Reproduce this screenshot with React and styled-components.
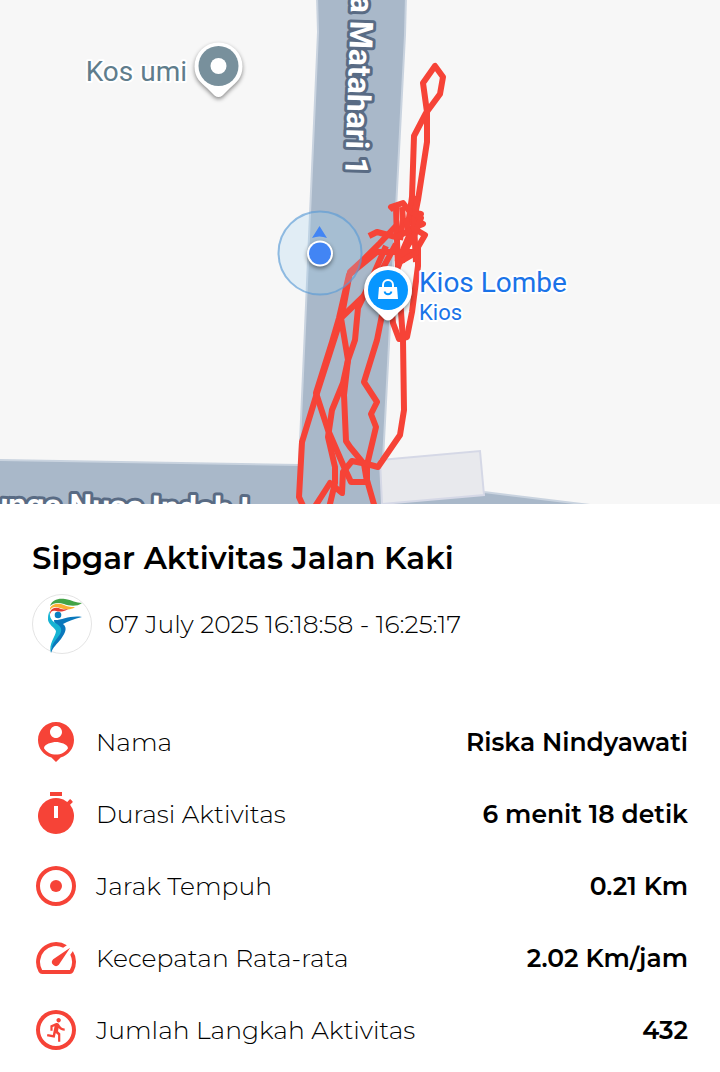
import React from 'react'
import styled, { createGlobalStyle } from "styled-components"

const GlobalStyle = createGlobalStyle`
    * {
        box-sizing: border-box;
    }

    body {
        margin: 0;
        background-color: #fff;
        color: #000;
        font-family: Montserrat, Inter, sans-serif;
    }
`;

const MapView = styled.svg`
    display: block;
    width: 100%;
    aspect-ratio: 720 / 504;
    background-color: #f7f7f7;
    font-family: Roboto, sans-serif;
`;

const Road = styled.path`
    fill: #a9b8c9;
    stroke: #c9d3df;
    stroke-width: 2;
`;

const RoadLabel = styled.text`
    fill: #fff;
    stroke: #596b84;
    stroke-width: 6;
    stroke-linejoin: round;
    paint-order: stroke;
    font-size: 32px;
    font-weight: 700;
`;

const PlaceLabel = styled.text`
    fill: ${({ $color }) => $color};
    stroke: #fff;
    stroke-width: 4;
    stroke-linejoin: round;
    paint-order: stroke;
    font-size: ${({ $small }) => $small ? "22px" : "28px"};
`;

const Track = styled.g`
    fill: none;
    stroke: #f64337;
    stroke-width: 6;
    stroke-linejoin: round;
`;

const Pin = styled.g`
    filter: drop-shadow(0 2px 2px rgba(0, 0, 0, 0.45));
`;

const Details = styled.main`
    padding: 34px 32px 6px;
`;

const Title = styled.h1`
    margin: 0 0 16px;
    font-size: 31px;
    font-weight: 600;
    line-height: 40px;
`;

const Session = styled.div`
    display: flex;
    align-items: center;
    gap: 16px;
    margin-bottom: 52px;
    font-size: 25px;
    font-weight: 300;
`;

const Avatar = styled.svg`
    flex: none;
    width: 60px;
    height: 60px;
`;

const Stats = styled.dl`
    margin: 0;
`;

const Row = styled.div`
    display: flex;
    align-items: center;
    min-height: 72px;
    font-size: 25px;
`;

const Icon = styled.svg`
    flex: none;
    width: 48px;
    height: 48px;
    margin-right: 16px;
    fill: #f64337;
`;

const Label = styled.dt`
    flex: 1;
    font-weight: 300;
`;

const Value = styled.dd`
    margin: 0;
    font-weight: 600;
    text-align: right;
`;

const ring = "M12 2a10 10 0 1 0 0 20 10 10 0 0 0 0-20zm0 18a8 8 0 1 1 0-16 8 8 0 0 1 0 16z"

const stats = [
    {
        label: "Nama",
        value: "Riska Nindyawati",
        icon: <path d="M12 2c-4.97 0-9 4.03-9 9 0 4.17 2.84 7.67 6.69 8.69L12 22l2.31-2.31C18.16 18.67 21 15.17 21 11c0-4.97-4.03-9-9-9zm0 2c1.66 0 3 1.34 3 3s-1.34 3-3 3-3-1.34-3-3 1.34-3 3-3zm0 14.3c-2.5 0-4.71-1.28-6-3.22.03-1.99 4-3.08 6-3.08 1.99 0 5.97 1.09 6 3.08-1.29 1.94-3.5 3.22-6 3.22z" />,
    },
    {
        label: "Durasi Aktivitas",
        value: "6 menit 18 detik",
        icon: <path fillRule="evenodd" d="M15 1H9v2h6V1zm4.03 6.39 1.42-1.42c-.43-.51-.9-.99-1.41-1.41l-1.42 1.42A9 9 0 1 0 19.03 7.39zM13 14h-2V8h2v6z" />,
    },
    {
        label: "Jarak Tempuh",
        value: "0.21 Km",
        icon: <><path d={ring} /><circle cx="12" cy="12" r="3" /></>,
    },
    {
        label: "Kecepatan Rata-rata",
        value: "2.02 Km/jam",
        icon: <path d="M20.38 8.57l-1.23 1.85a8 8 0 0 1-.22 7.58H5.07A8 8 0 0 1 15.58 6.85l1.85-1.23A10 10 0 0 0 3.35 19a2 2 0 0 0 1.72 1h13.85a2 2 0 0 0 1.74-1 10 10 0 0 0-.27-10.44zm-9.79 6.84a2 2 0 0 0 2.83 0l5.66-8.49-8.49 5.66a2 2 0 0 0 0 2.83z" />,
    },
    {
        label: "Jumlah Langkah Aktivitas",
        value: "432",
        icon: (
            <>
                <path d={ring} />
                <path transform="translate(5.9 5.2) scale(.55)" d="M13.49 5.48c1.1 0 2-.9 2-2s-.9-2-2-2-2 .9-2 2 .9 2 2 2zm-3.6 13.9l1-4.4 2.1 2v6h2v-7.5l-2.1-2 .6-3c1.3 1.5 3.3 2.5 5.5 2.5v-2c-1.9 0-3.5-1-4.3-2.4l-1-1.6c-.4-.6-1-1-1.7-1-.3 0-.5.1-.8.1l-5.2 2.2v4.7h2v-3.4l1.8-.7-1.6 8.1-4.9-1-.4 2 7 1.4z" />
            </>
        ),
    },
]

const tracks = [
    "408,225 412,197 414,136 426,113 440,94 443,77 435,66 423,83 427,112 427,142 418,200 411,235 402,262",
    "394,210 391,207 403,203 410,212 421,214 413,219 423,224 413,228 425,235 418,247 418,266 412,312 407,337 399,339 393,323 391,300",
    "396,207 397,240 398,267",
    "402,207 403,220 400,240",
    "417,196 414,225 416,262",
    "406,218 409,236 403,250",
    "412,212 421,218 414,236 397,262",
    "369,236 377,232 396,237 411,230",
    "396,226 380,243 363,260 350,272 342,315 334,340 317,393 302,442 299,497 304,508",
    "417,252 377,252 349,275 339,318 332,342 316,393 328,430 344,467 351,482 367,482 364,464 350,447 346,441 344,395 348,360 355,340 358,308 368,287 386,246",
    "396,244 372,288 341,318 346,348 348,360 343,383 332,410 328,437 335,467 335,483 329,508",
    "417,252 400,262 384,305 377,340 364,382 377,402 371,414 376,427 367,465 367,480 375,508",
    "398,270 403,340 404,410 400,435 378,467 367,464 352,461 343,472 342,493 330,483 314,508",
]

const pinShape = "M0-24a24 24 0 0 0-24 24c0 11 6 16 13 22l7 7q4 3 8 0l7-7c7-6 13-11 13-22a24 24 0 0 0-24-24z"

const ActivityMap = () => {
    return (
        <MapView viewBox="0 0 720 504" preserveAspectRatio="xMidYMid slice" role="img" aria-label="Rute aktivitas">
            <Road d="M-4 460 299 465 318 32 317-4H406L405 35 383 460 484 492 590 505V510H-4z" />
            <path d="M380 460 480 451 484 495 382 504z" fill="#e8e9ed" stroke="#d5d8e6" strokeWidth="2" />
            <RoadLabel transform="translate(345 175) rotate(92)" textAnchor="end">a Matahari 1</RoadLabel>
            <RoadLabel transform="translate(249 520) rotate(1)" textAnchor="end">unga Nusa Indah I</RoadLabel>

            <Track>
                {tracks.map((points) => <polyline key={points} points={points} />)}
            </Track>

            <circle cx="320" cy="253" r="41.5" fill="#9fd0ee" fillOpacity=".25" stroke="#5b9bd5" strokeOpacity=".65" strokeWidth="2" />
            <path d="M319.500 226 327 238Q319.500 235 312 238z" fill="#4285f4" />
            <Pin>
                <circle cx="320" cy="253.500" r="13" fill="#fff" />
            </Pin>
            <circle cx="320" cy="253.500" r="11" fill="#4285f4" />

            <Pin>
                <path transform="translate(218.500 66.500)" d={pinShape} fill="#fff" />
            </Pin>
            <circle cx="218.500" cy="66" r="20" fill="#78909c" />
            <circle cx="218.500" cy="66" r="8" fill="#fff" />
            <PlaceLabel x="187" y="81" textAnchor="end" $color="#5f7d8c">Kos umi</PlaceLabel>

            <Pin>
                <path transform="translate(388 290)" d={pinShape} fill="#fff" />
            </Pin>
            <circle cx="388" cy="290" r="20" fill="#0796ff" />
            <path d="M379 287H397L398 299H378z" fill="#fff" />
            <path d="M383 288v-3a5 5 0 0 1 10 0v3" fill="none" stroke="#fff" strokeWidth="2" />
            <path d="M384.500 291.500a3.600 3.600 0 0 0 7 0" fill="none" stroke="#0796ff" strokeWidth="1.800" />
            <PlaceLabel x="419" y="292" $color="#1a73e8">Kios Lombe</PlaceLabel>
            <PlaceLabel x="419" y="320" $color="#1a73e8" $small>Kios</PlaceLabel>
        </MapView>
    )
}

const ClubLogo = () => {
    return (
        <Avatar viewBox="0 0 60 60" aria-hidden="true">
            <circle cx="30" cy="30" r="29.500" fill="#fff" stroke="#e4e4e4" />
            <path d="M18 12C20 6 26 4 33 5 40 6 44 9 50 9 45 13 37 12 32 10 26 8 21 9 18 12z" fill="#43a347" />
            <path d="M18 14C21 9 27 9 32 11 37 13 39 13 43 13 38 17 32 15 28 14 23 12 20 13 18 16z" fill="#fbb034" />
            <path d="M18 18C20 13 25 13 29 15 32 16 34 15 36 15 32 18 27 18 24 17 21 16 19 17 18 20z" fill="#e43d32" />
            <circle cx="26" cy="21" r="3.300" fill="#0a7fc0" />
            <path d="M22 26C28 27 38 21 50 23 42 25 36 27 31 30 36 34 33 39 29 45 25 50 21 53 19 59 18 50 25 42 27 36 26 32 22 30 22 26z" fill="#0a78bc" />
            <path d="M18 17C17 24 20 27 25 30 31 34 30 38 26 43 21 49 19 53 19 59 16 50 24 42 24 37 22 33 17 31 16 26 16 22 16 20 18 17z" fill="#16b3d3" />
        </Avatar>
    )
}

const App = () => {
    return (
        <>
            <GlobalStyle />
            <ActivityMap />
            <Details>
                <Title>Sipgar Aktivitas Jalan Kaki</Title>
                <Session>
                    <ClubLogo />
                    <span>07 July 2025 16:18:58 - 16:25:17</span>
                </Session>
                <Stats>
                    {stats.map(({ label, value, icon }) => (
                        <Row key={label}>
                            <Icon viewBox="0 0 24 24" aria-hidden="true">{icon}</Icon>
                            <Label>{label}</Label>
                            <Value>{value}</Value>
                        </Row>
                    ))}
                </Stats>
            </Details>
        </>
    )
}

export default App
